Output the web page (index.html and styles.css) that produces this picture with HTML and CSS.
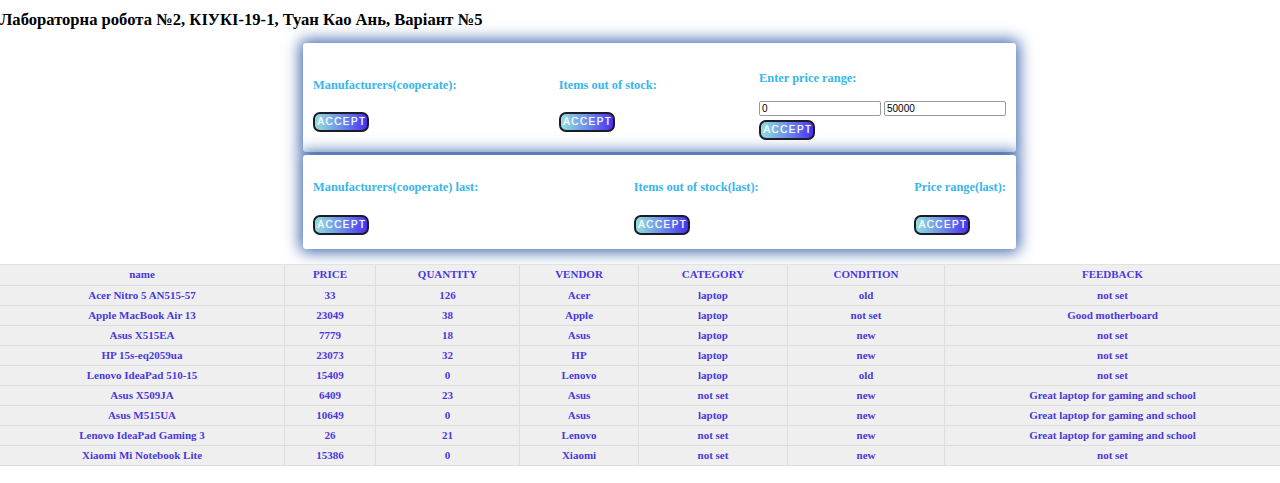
FILE: index.html
```html
<!DOCTYPE html>
<html lang="uk">
<head>
<meta charset="utf-8">
<title>Лабораторна робота №2</title>
<link rel="stylesheet" href="styles.css">
</head>
<body>
<h1 class="title">Лабораторна робота №2, КІУКІ-19-1, Туан Као Ань, Варіант №5</h1>

<div class="panels">
  <div class="panel panel-top">
    <div class="col">
      <div class="label">Manufacturers(cooperate):</div>
      <button class="btn">ACCEPT</button>
    </div>
    <div class="col">
      <div class="label">Items out of stock:</div>
      <button class="btn">ACCEPT</button>
    </div>
    <div class="col col-range">
      <div class="label">Enter price range:</div>
      <div class="inputs">
        <input class="inp" type="text" value="0">
        <input class="inp" type="text" value="50000">
      </div>
      <button class="btn">ACCEPT</button>
    </div>
  </div>
  <div class="panel panel-bottom">
    <div class="col">
      <div class="label">Manufacturers(cooperate) last:</div>
      <button class="btn">ACCEPT</button>
    </div>
    <div class="col">
      <div class="label">Items out of stock(last):</div>
      <button class="btn">ACCEPT</button>
    </div>
    <div class="col">
      <div class="label">Price range(last):</div>
      <button class="btn">ACCEPT</button>
    </div>
  </div>
</div>

<table class="grid">
  <colgroup>
    <col class="c-name"><col class="c-price"><col class="c-qty"><col class="c-vendor"><col class="c-cat"><col class="c-cond"><col class="c-fb">
  </colgroup>
  <thead>
    <tr><th>name</th><th>PRICE</th><th>QUANTITY</th><th>VENDOR</th><th>CATEGORY</th><th>CONDITION</th><th>FEEDBACK</th></tr>
  </thead>
  <tbody>
    <tr><td>Acer Nitro 5 AN515-57</td><td>33</td><td>126</td><td>Acer</td><td>laptop</td><td>old</td><td>not set</td></tr>
    <tr><td>Apple MacBook Air 13</td><td>23049</td><td>38</td><td>Apple</td><td>laptop</td><td>not set</td><td>Good motherboard</td></tr>
    <tr><td>Asus X515EA</td><td>7779</td><td>18</td><td>Asus</td><td>laptop</td><td>new</td><td>not set</td></tr>
    <tr><td>HP 15s-eq2059ua</td><td>23073</td><td>32</td><td>HP</td><td>laptop</td><td>new</td><td>not set</td></tr>
    <tr><td>Lenovo IdeaPad 510-15</td><td>15409</td><td>0</td><td>Lenovo</td><td>laptop</td><td>old</td><td>not set</td></tr>
    <tr><td>Asus X509JA</td><td>6409</td><td>23</td><td>Asus</td><td>not set</td><td>new</td><td>Great laptop for gaming and school</td></tr>
    <tr><td>Asus M515UA</td><td>10649</td><td>0</td><td>Asus</td><td>laptop</td><td>new</td><td>Great laptop for gaming and school</td></tr>
    <tr><td>Lenovo IdeaPad Gaming 3</td><td>26</td><td>21</td><td>Lenovo</td><td>not set</td><td>new</td><td>Great laptop for gaming and school</td></tr>
    <tr><td>Xiaomi Mi Notebook Lite</td><td>15386</td><td>0</td><td>Xiaomi</td><td>not set</td><td>new</td><td>not set</td></tr>
  </tbody>
</table>
</body>
</html>
```
FILE: styles.css
```css
html, body {
  margin: 0;
  padding: 0;
  background: #ffffff;
  font-family: "Liberation Serif", "Times New Roman", serif;
}

.title {
  margin: 0;
  padding-top: 10px;
  font-size: 16.6px;
  line-height: 20px;
  font-weight: bold;
  color: #000;
}

.panels {
  width: 713px;
  margin: 13px 0 0 303px;
}

.panel {
  background: #ffffff;
  border-radius: 3px;
  box-shadow: 0 0 15px 3px rgba(46, 90, 166, 0.92);
  display: flex;
  justify-content: space-between;
  align-items: center;
  padding-left: 10px;
  padding-right: 10px;
}

.panel-top {
  padding-top: 25px;
  padding-bottom: 12px;
}

.panel-bottom {
  margin-top: 3px;
  padding-top: 24px;
  padding-bottom: 14px;
}

.col {
  display: flex;
  flex-direction: column;
  align-items: flex-start;
}

.label {
  font-size: 12.4px;
  font-weight: bold;
  line-height: 16px;
  color: #37b6ec;
  margin-bottom: 20px;
  white-space: nowrap;
}

.panel-top .label {
  margin: 1px 0 19px;
}

.panel-top .col-range .label {
  margin: 2px 0 15px;
}

.inputs {
  display: flex;
  gap: 3px;
  margin-bottom: 4px;
}

.inp {
  width: 122px;
  height: 15px;
  box-sizing: border-box;
  border: 1px solid #9a9a9a;
  border-radius: 2px;
  padding: 0 2px;
  font-family: "Liberation Sans", Arial, sans-serif;
  font-size: 10px;
  color: #000;
  background: #fff;
}

.btn {
  width: 56px;
  height: 20px;
  box-sizing: border-box;
  border: 2px solid #1c1c28;
  border-radius: 7px;
  background: linear-gradient(90deg, #90e0dc 0%, #6c8ee8 50%, #4a2ff0 100%);
  color: #f2f8ff;
  font-family: "Liberation Sans", Arial, sans-serif;
  font-size: 10px;
  letter-spacing: 1.4px;
  padding: 0 0 0 2px;
  line-height: 16px;
  text-shadow: 0 0 1px rgba(255, 255, 255, 0.9);
  cursor: pointer;
}

.grid {
  width: 1280px;
  margin-top: 15px;
  border-collapse: separate;
  border-spacing: 0;
  table-layout: fixed;
  background: #efefef;
  border-top: 1px solid #e2e2e2;
}

.c-name { width: 285px; }
.c-price { width: 91px; }
.c-qty { width: 144px; }
.c-vendor { width: 119px; }
.c-cat { width: 149px; }
.c-cond { width: 157px; }
.c-fb { width: 335px; }

.grid th,
.grid td {
  height: 19px;
  padding: 0;
  text-align: center;
  font-size: 11px;
  font-weight: bold;
  color: #4a38de;
  border-right: 1px solid #dedede;
  border-bottom: 1px solid #dcdcdc;
  line-height: 19px;
}

.grid th {
  height: 20px;
  vertical-align: top;
}

.grid th:last-child,
.grid td:last-child {
  border-right: none;
}
```
